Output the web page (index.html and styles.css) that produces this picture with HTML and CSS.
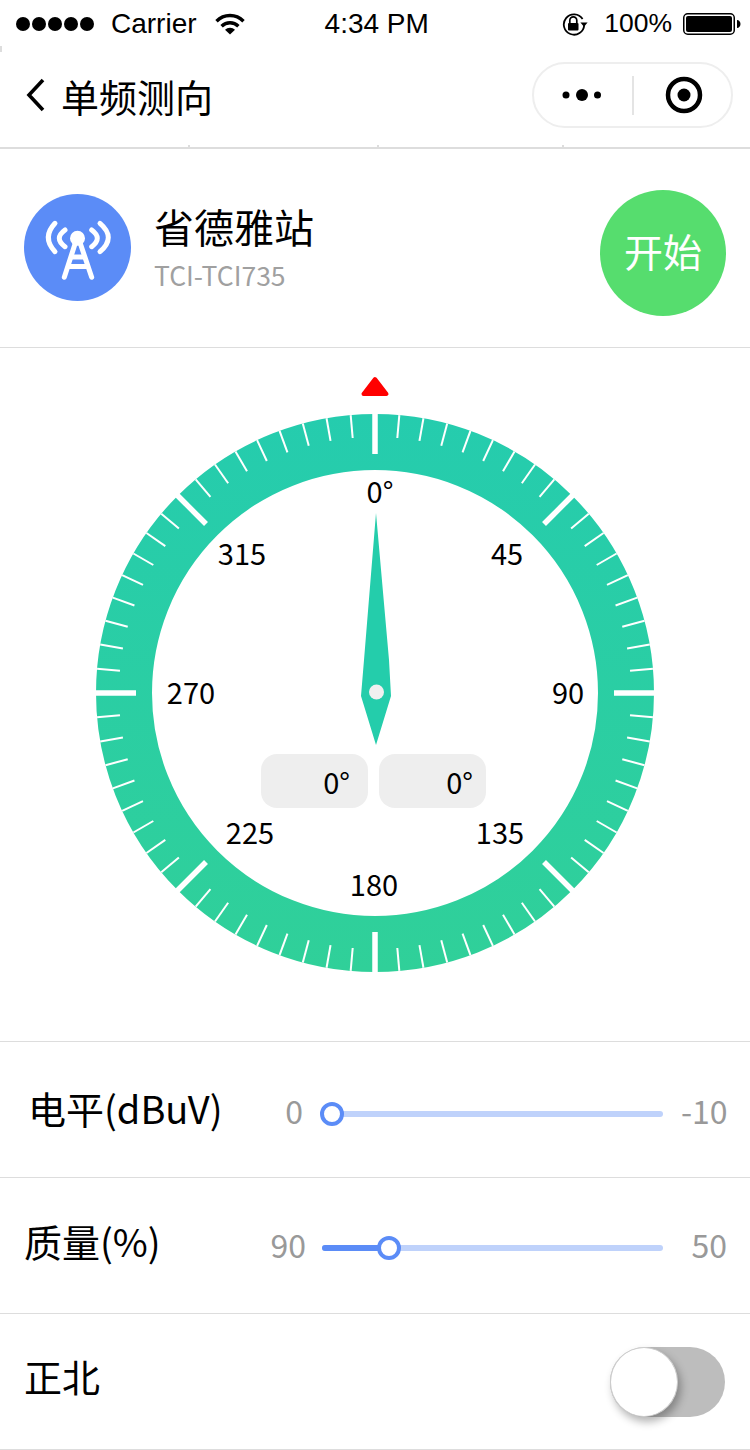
FILE: index.html
```html
<!DOCTYPE html>
<html lang="en">
<head>
    <meta charset="UTF-8">
    <meta name="viewport" content="width=device-width, initial-scale=1.0">
    <title>单频测向</title>
    <link rel="stylesheet" href="styles.css">
</head>
<body>
    <div class="status-bar">
        <div class="signal">
            <span></span><span></span><span></span><span></span><span></span>
        </div>
        <span class="carrier">Carrier</span>
        <svg class="wifi" width="30" height="22" viewBox="0 0 30 22">
            <path d="M1.500 8.200a19 19 0 0 1 27 0" fill="none" stroke="#000" stroke-width="3.400"/>
            <path d="M6.600 13.200a12 12 0 0 1 16.800 0" fill="none" stroke="#000" stroke-width="3.400"/>
            <path d="M10 16.800a7 7 0 0 1 10 0L15 21.500z"/>
        </svg>
        <span class="clock">4:34 PM</span>
        <div class="status-right">
            <svg class="rotation-lock" width="28" height="24" viewBox="0 0 28 24">
                <path d="M21.600 7a10.200 10.200 0 1 0 1.600 6" fill="none" stroke="#000" stroke-width="1.800"/>
                <path d="M19.400 10.400h7.200l-3.600 4.400z"/>
                <rect x="7" y="11" width="10.500" height="7.500" rx="1"/>
                <path d="M8.800 11V8.400a3.500 3.500 0 0 1 7 0V11" fill="none" stroke="#000" stroke-width="1.700"/>
            </svg>
            <span class="battery-text">100%</span>
            <svg class="battery" width="58" height="22" viewBox="0 0 58 22">
                <rect x="0.750" y="0.750" width="50.500" height="20.500" rx="4" fill="none" stroke="#000" stroke-width="1.500"/>
                <rect x="3" y="3" width="46" height="16" rx="2"/>
                <path d="M54 7c2 0 3.500 1.800 3.500 4s-1.500 4-3.500 4z"/>
            </svg>
        </div>
    </div>

    <div class="nav-bar">
        <svg class="back" width="20" height="34" viewBox="0 0 20 34">
            <path d="M17 2L3 17l14 15" fill="none" stroke="#000" stroke-width="3.600"/>
        </svg>
        <span class="nav-title">单频测向</span>
        <div class="capsule">
            <div class="capsule-part">
                <svg class="more" width="44" height="16" viewBox="0 0 44 16">
                    <circle cx="7" cy="8" r="3.500"/>
                    <circle cx="23" cy="8" r="6"/>
                    <circle cx="38.500" cy="8" r="3.500"/>
                </svg>
            </div>
            <div class="capsule-line"></div>
            <div class="capsule-part">
                <svg class="target" width="38" height="38" viewBox="0 0 38 38">
                    <circle cx="19" cy="19" r="16" fill="none" stroke="#000" stroke-width="4.500"/>
                    <circle cx="19" cy="19" r="6.500"/>
                </svg>
            </div>
        </div>
    </div>

    <div class="station">
        <svg class="station-icon" width="107" height="107" viewBox="0 0 107 107">
            <circle cx="53.500" cy="53.500" r="53.500" fill="#5b8cf7"/>
            <g fill="none" stroke="#fff" stroke-width="5" stroke-linecap="round">
                <path d="M31 29.300Q17.600 43.500 31 57.700"/>
                <path d="M41 36Q29.600 44.300 41 52.700"/>
                <path d="M76 29.300Q92.600 43.500 76 57.700"/>
                <path d="M67.700 36Q78.900 44.300 67.700 52.700"/>
                <path d="M51 50L40.300 83.300"/>
                <path d="M56.500 50L67.700 83.300"/>
                <path d="M47.700 63H60"/>
                <path d="M44.500 72.500H63.500"/>
            </g>
            <circle cx="53.500" cy="44.300" r="7.500" fill="#fff"/>
        </svg>
        <div class="station-info">
            <div class="station-name">省德雅站</div>
            <div class="station-code">TCI-TCI735</div>
        </div>
        <div class="start-btn">开始</div>
    </div>

    <div class="dial">
        <svg class="dial-svg" width="750" height="693" viewBox="-375 -345 750 693">
            <defs>
                <linearGradient id="ring" gradientUnits="userSpaceOnUse" x1="0" y1="-279" x2="0" y2="279">
                    <stop offset="0" stop-color="#25ccae"/>
                    <stop offset="1" stop-color="#30d099"/>
                </linearGradient>
                <rect id="m" x="-1" y="-279" width="2" height="23" fill="#fff"/>
                <rect id="b" x="-2.750" y="-280" width="5.500" height="41" fill="#fff"/>
            </defs>
            <path d="M0 -314L11.500 -299H-11.500Z" fill="#f00" stroke="#f00" stroke-width="4" stroke-linejoin="round"/>
            <circle cx="0" cy="0" r="251" fill="none" stroke="url(#ring)" stroke-width="56"/>
            <g>
                <use href="#b"/><use href="#m" transform="rotate(5)"/><use href="#m" transform="rotate(10)"/><use href="#m" transform="rotate(15)"/><use href="#m" transform="rotate(20)"/><use href="#m" transform="rotate(25)"/><use href="#m" transform="rotate(30)"/><use href="#m" transform="rotate(35)"/><use href="#m" transform="rotate(40)"/>
                <use href="#b" transform="rotate(45)"/><use href="#m" transform="rotate(50)"/><use href="#m" transform="rotate(55)"/><use href="#m" transform="rotate(60)"/><use href="#m" transform="rotate(65)"/><use href="#m" transform="rotate(70)"/><use href="#m" transform="rotate(75)"/><use href="#m" transform="rotate(80)"/><use href="#m" transform="rotate(85)"/>
                <use href="#b" transform="rotate(90)"/><use href="#m" transform="rotate(95)"/><use href="#m" transform="rotate(100)"/><use href="#m" transform="rotate(105)"/><use href="#m" transform="rotate(110)"/><use href="#m" transform="rotate(115)"/><use href="#m" transform="rotate(120)"/><use href="#m" transform="rotate(125)"/><use href="#m" transform="rotate(130)"/>
                <use href="#b" transform="rotate(135)"/><use href="#m" transform="rotate(140)"/><use href="#m" transform="rotate(145)"/><use href="#m" transform="rotate(150)"/><use href="#m" transform="rotate(155)"/><use href="#m" transform="rotate(160)"/><use href="#m" transform="rotate(165)"/><use href="#m" transform="rotate(170)"/><use href="#m" transform="rotate(175)"/>
                <use href="#b" transform="rotate(180)"/><use href="#m" transform="rotate(185)"/><use href="#m" transform="rotate(190)"/><use href="#m" transform="rotate(195)"/><use href="#m" transform="rotate(200)"/><use href="#m" transform="rotate(205)"/><use href="#m" transform="rotate(210)"/><use href="#m" transform="rotate(215)"/><use href="#m" transform="rotate(220)"/>
                <use href="#b" transform="rotate(225)"/><use href="#m" transform="rotate(230)"/><use href="#m" transform="rotate(235)"/><use href="#m" transform="rotate(240)"/><use href="#m" transform="rotate(245)"/><use href="#m" transform="rotate(250)"/><use href="#m" transform="rotate(255)"/><use href="#m" transform="rotate(260)"/><use href="#m" transform="rotate(265)"/>
                <use href="#b" transform="rotate(270)"/><use href="#m" transform="rotate(275)"/><use href="#m" transform="rotate(280)"/><use href="#m" transform="rotate(285)"/><use href="#m" transform="rotate(290)"/><use href="#m" transform="rotate(295)"/><use href="#m" transform="rotate(300)"/><use href="#m" transform="rotate(305)"/><use href="#m" transform="rotate(310)"/>
                <use href="#b" transform="rotate(315)"/><use href="#m" transform="rotate(320)"/><use href="#m" transform="rotate(325)"/><use href="#m" transform="rotate(330)"/><use href="#m" transform="rotate(335)"/><use href="#m" transform="rotate(340)"/><use href="#m" transform="rotate(345)"/><use href="#m" transform="rotate(350)"/><use href="#m" transform="rotate(355)"/>
            </g>
            <path d="M1 -180L14 -33L16 3L1 52L-14 3L-11 -33Z" fill="#24cdab"/>
            <circle cx="1.500" cy="-1" r="7.500" fill="#f0f0f0"/>
        </svg>
        <span class="mark m0">0°</span>
        <span class="mark m45">45</span>
        <span class="mark m90">90</span>
        <span class="mark m135">135</span>
        <span class="mark m180">180</span>
        <span class="mark m225">225</span>
        <span class="mark m270">270</span>
        <span class="mark m315">315</span>
        <div class="readouts">
            <div class="readout first">0°</div>
            <div class="readout second">0°</div>
        </div>
    </div>

    <div class="row">
        <div class="row-label label-level">电平(dBuV)</div>
        <div class="slider">
            <span class="slider-min min-level">0</span>
            <div class="track">
                <div class="track-fill fill-level"></div>
                <div class="thumb"></div>
            </div>
            <span class="slider-max">-10</span>
        </div>
    </div>
    <div class="row">
        <div class="row-label label-quality">质量(%)</div>
        <div class="slider slider-quality">
            <span class="slider-min min-quality">90</span>
            <div class="track">
                <div class="track-fill fill-quality"></div>
                <div class="thumb"></div>
            </div>
            <span class="slider-max">50</span>
        </div>
    </div>
    <div class="row">
        <div class="row-label label-north">正北</div>
        <div class="switch">
            <div class="switch-thumb"></div>
        </div>
    </div>
</body>
</html>
```

FILE: styles.css
```css
body, html {
    margin: 0;
    padding: 0;
    background: #fff;
}

body {
    width: 750px;
    font-family: "Noto Sans CJK SC", "Noto Sans", sans-serif;
    color: #000;
    overflow: hidden;
}

/* status bar */
.status-bar {
    display: flex;
    align-items: center;
    box-sizing: border-box;
    height: 46px;
    padding: 1px 9px 0 16px;
    font-family: "Liberation Sans", Arial, sans-serif;
    font-size: 28px;
}

.signal {
    display: flex;
    gap: 2px;
}

.signal span {
    width: 14px;
    height: 14px;
    border-radius: 50%;
    background: #000;
}

.carrier {
    margin-left: 17px;
}

.wifi {
    margin-left: 18px;
}

.clock {
    margin-left: 80px;
}

.status-right {
    display: flex;
    align-items: center;
    margin-left: auto;
}

.battery-text {
    margin-left: 15px;
    font-size: 26.500px;
}

.battery {
    margin-left: 11px;
}

/* nav */
.nav-bar {
    display: flex;
    align-items: center;
    box-sizing: border-box;
    height: 103px;
    padding: 0 17px 3px 26px;
    border-bottom: 2px solid #ddd;
    /* the small marks the screenshot has on the edge of the bar */
    background:
        linear-gradient(#ddd, #ddd) 0 0 / 2px 6px no-repeat,
        linear-gradient(#ddd, #ddd) 188px 100% / 2px 2px no-repeat,
        linear-gradient(#ddd, #ddd) 377px 100% / 2px 2px no-repeat,
        linear-gradient(#ddd, #ddd) 562px 100% / 2px 2px no-repeat;
}

.nav-title {
    margin-left: 15px;
    font-size: 38px;
}

.capsule {
    display: flex;
    align-items: center;
    box-sizing: border-box;
    width: 201px;
    height: 66px;
    margin-left: auto;
    border: 2px solid #eee;
    border-radius: 33px;
}

.capsule-part {
    flex: 1;
    display: flex;
    justify-content: center;
    align-items: center;
}

.more {
    margin-right: 4px;
}

.target {
    margin-left: 4px;
}

.capsule-line {
    width: 2px;
    height: 39px;
    background: #e4e4e4;
}

/* station */
.station {
    display: flex;
    align-items: flex-start;
    box-sizing: border-box;
    height: 199px;
    padding: 0 24px;
    border-bottom: 1px solid #ddd;
}

.station-icon {
    margin-top: 45px;
}

.station-info {
    margin: 49px 0 0 23px;
}

.station-name {
    font-size: 40px;
    line-height: 56px;
}

.station-code {
    margin-top: 3px;
    font-size: 26.500px;
    line-height: 36px;
    color: #a0a0a0;
}

.start-btn {
    display: flex;
    justify-content: center;
    align-items: center;
    box-sizing: border-box;
    width: 126px;
    height: 126px;
    margin: 41px 0 0 auto;
    padding-bottom: 6px;
    border-radius: 50%;
    background: #56dd6e;
    color: #fff;
    font-size: 39px;
}

/* dial */
.dial {
    position: relative;
    height: 694px;
    box-sizing: border-box;
    border-bottom: 1px solid #ddd;
}

.dial-svg {
    display: block;
}

.mark {
    position: absolute;
    font-size: 29px;
    line-height: 40px;
    transform: translate(-50%, -50%);
}

.m0 { left: 380px; top: 142px; }
.m45 { left: 507px; top: 204px; }
.m90 { left: 568px; top: 343px; }
.m135 { left: 500px; top: 483px; }
.m180 { left: 374px; top: 535px; }
.m225 { left: 250px; top: 483px; }
.m270 { left: 191px; top: 343px; }
.m315 { left: 242px; top: 204px; }

.readouts {
    position: absolute;
    top: 406px;
    left: 261px;
    display: flex;
    gap: 11px;
}

.readout {
    width: 107px;
    height: 54px;
    box-sizing: border-box;
    border-radius: 16px;
    background: #eee;
    font-size: 29px;
    line-height: 54px;
    text-align: right;
}

.first { padding-right: 18px; }
.second { padding-right: 13px; }

/* rows */
.row {
    display: flex;
    align-items: center;
    box-sizing: border-box;
    height: 136px;
    padding: 0 25px 0 24px;
    border-bottom: 1px solid #ddd;
}

.row-label {
    font-size: 38px;
    white-space: nowrap;
}

.label-level { margin: 0 0 4px 4px; }
.label-quality { margin-bottom: 10px; }
.label-north { margin-bottom: 12px; }

.slider {
    display: flex;
    align-items: center;
    margin: 0 -2px 0 auto;
    color: #999;
    font-size: 32px;
}

.slider-quality {
    margin-bottom: 4px;
}

.min-level { margin-right: 19px; }
.min-quality { margin-right: 16px; }

.track {
    position: relative;
    width: 341px;
    height: 6px;
    margin: 8px 18px 0 0;
    border-radius: 3px;
    background: #bfd2fb;
}

.track-fill {
    height: 100%;
    border-radius: 3px;
    background: #5b8cf7;
}

.fill-level { width: 10px; }
.fill-quality { width: 67px; }

.thumb {
    position: absolute;
    top: 50%;
    width: 24px;
    height: 24px;
    box-sizing: border-box;
    border: 4.500px solid #5b8cf7;
    border-radius: 50%;
    background: #fff;
    transform: translate(-50%, -50%);
}

.fill-level + .thumb { left: 10px; }
.fill-quality + .thumb { left: 67px; }

.slider-max {
    width: 46px;
    text-align: right;
}

.switch {
    width: 115px;
    height: 70px;
    margin-left: auto;
    border-radius: 35px;
    background: #bdbdbd;
}

.switch-thumb {
    width: 68px;
    height: 70px;
    box-sizing: border-box;
    border: 1px solid #ccc;
    border-radius: 50%;
    background: #fff;
    box-shadow: 3px 5px 9px rgba(0, 0, 0, 0.3);
}
```
